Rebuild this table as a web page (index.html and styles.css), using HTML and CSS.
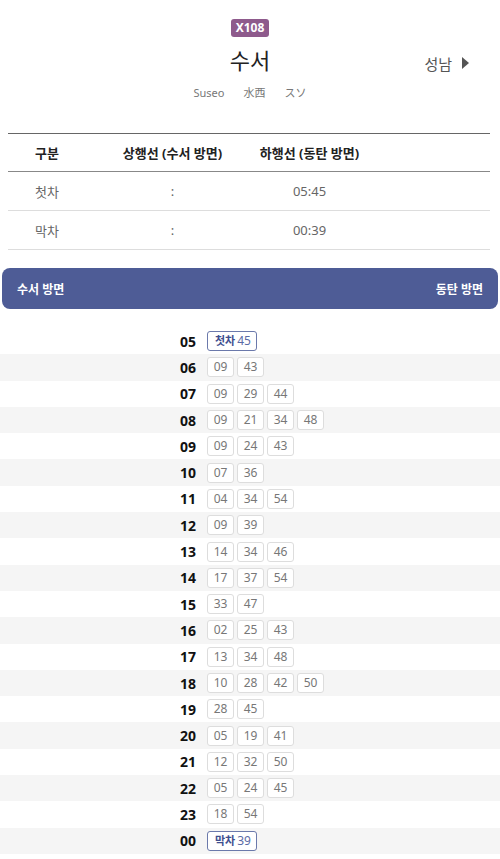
FILE: index.html
```html
<!DOCTYPE html>
<html lang="ko">
    <head>
        <meta charset="UTF-8">
        <meta name="viewport" content="width=device-width, initial-scale=1.0">
        <title>X108 수서 시간표</title>

        <!-- styling untuk halaman -->
        <link rel="stylesheet" href="styles.css">
    </head>
    <body>

        <!-- station header -->
        <header class="station">
            <span class="badge">X108</span>
            <div class="title-row">
                <span></span>
                <h1 class="title">수서</h1>
                <a class="next" href="#">성남 <span class="arrow"></span></a>
            </div>
            <p class="names">
                <span>Suseo</span>
                <span>水西</span>
                <span>スソ</span>
            </p>
        </header>

        <!-- first / last train -->
        <div class="summary">
            <div class="summary-row summary-head">
                <span>구분</span>
                <span>상행선 (수서 방면)</span>
                <span>하행선 (동탄 방면)</span>
                <span></span>
            </div>
            <div class="summary-row">
                <span>첫차</span>
                <span>:</span>
                <span>05:45</span>
                <span></span>
            </div>
            <div class="summary-row">
                <span>막차</span>
                <span>:</span>
                <span>00:39</span>
                <span></span>
            </div>
        </div>

        <!-- direction bar -->
        <div class="direction">
            <span>수서 방면</span>
            <span>동탄 방면</span>
        </div>

        <!-- timetable -->
        <div class="timetable">
            <div class="hour-row"><span class="hour">05</span><span class="min first"><b>첫차</b>45</span></div>
            <div class="hour-row"><span class="hour">06</span><span class="min">09</span><span class="min">43</span></div>
            <div class="hour-row"><span class="hour">07</span><span class="min">09</span><span class="min">29</span><span class="min">44</span></div>
            <div class="hour-row"><span class="hour">08</span><span class="min">09</span><span class="min">21</span><span class="min">34</span><span class="min">48</span></div>
            <div class="hour-row"><span class="hour">09</span><span class="min">09</span><span class="min">24</span><span class="min">43</span></div>
            <div class="hour-row"><span class="hour">10</span><span class="min">07</span><span class="min">36</span></div>
            <div class="hour-row"><span class="hour">11</span><span class="min">04</span><span class="min">34</span><span class="min">54</span></div>
            <div class="hour-row"><span class="hour">12</span><span class="min">09</span><span class="min">39</span></div>
            <div class="hour-row"><span class="hour">13</span><span class="min">14</span><span class="min">34</span><span class="min">46</span></div>
            <div class="hour-row"><span class="hour">14</span><span class="min">17</span><span class="min">37</span><span class="min">54</span></div>
            <div class="hour-row"><span class="hour">15</span><span class="min">33</span><span class="min">47</span></div>
            <div class="hour-row"><span class="hour">16</span><span class="min">02</span><span class="min">25</span><span class="min">43</span></div>
            <div class="hour-row"><span class="hour">17</span><span class="min">13</span><span class="min">34</span><span class="min">48</span></div>
            <div class="hour-row"><span class="hour">18</span><span class="min">10</span><span class="min">28</span><span class="min">42</span><span class="min">50</span></div>
            <div class="hour-row"><span class="hour">19</span><span class="min">28</span><span class="min">45</span></div>
            <div class="hour-row"><span class="hour">20</span><span class="min">05</span><span class="min">19</span><span class="min">41</span></div>
            <div class="hour-row"><span class="hour">21</span><span class="min">12</span><span class="min">32</span><span class="min">50</span></div>
            <div class="hour-row"><span class="hour">22</span><span class="min">05</span><span class="min">24</span><span class="min">45</span></div>
            <div class="hour-row"><span class="hour">23</span><span class="min">18</span><span class="min">54</span></div>
            <div class="hour-row"><span class="hour">00</span><span class="min first"><b>막차</b>39</span></div>
        </div>

    </body>
</html>
```

FILE: styles.css
```css
body {
    font-family: "Noto Sans", "Noto Sans CJK KR", sans-serif;
    margin: 0;
    padding: 0;
    color: #222;
    background-color: #fff;
}

.station {
    display: flex;
    flex-direction: column;
    align-items: center;
    padding-top: 19px;
}

.badge {
    height: 18px;
    line-height: 18px;
    padding: 0 5px;
    background-color: #8e5a8c;
    color: #fff;
    font-size: 12px;
    font-weight: bold;
    border-radius: 3px;
}

.title-row {
    align-self: stretch;
    display: grid;
    grid-template-columns: 1fr auto 1fr;
    align-items: center;
    margin-top: 8px;
}

.title {
    margin: 0;
    font-size: 22px;
    font-weight: normal;
    line-height: 30px;
}

.next {
    justify-self: end;
    padding: 6px 31px 0 0;
    display: flex;
    align-items: center;
    gap: 10px;
    font-size: 15px;
    color: #555;
    text-decoration: none;
}

.arrow {
    width: 0;
    height: 0;
    border-top: 6px solid transparent;
    border-bottom: 6px solid transparent;
    border-left: 7px solid #555;
}

.names {
    margin: 10px 0 0;
    font-size: 11px;
    line-height: 16px;
    color: #777;
    display: flex;
    justify-content: center;
    gap: 19px;
}

.summary {
    margin: 32px 10px 0 8px;
    border-top: 1px solid #666;
}

.summary-row {
    display: grid;
    grid-template-columns: 78px 173px 101px 1fr;
    height: 38px;
    align-items: center;
    text-align: center;
    font-size: 13px;
    color: #666;
    border-bottom: 1px solid #ddd;
}

.summary-head {
    height: 37px;
    font-weight: bold;
    color: #222;
    border-bottom-color: #888;
}

.direction {
    margin: 18px 2px 0;
    height: 41px;
    padding: 0 15px;
    display: flex;
    justify-content: space-between;
    align-items: center;
    background-color: #4e5c96;
    border-radius: 8px;
    color: #fff;
    font-size: 12px;
    font-weight: bold;
}

.timetable {
    margin-top: 19px;
}

.hour-row {
    height: 26.3px;
    display: flex;
    align-items: center;
    gap: 3px;
}

.hour-row:nth-child(even) {
    background-color: #f5f5f5;
}

.hour {
    width: 196px;
    margin-right: 8px;
    text-align: right;
    font-size: 14px;
    font-weight: bold;
    color: #111;
}

.min {
    box-sizing: border-box;
    width: 27px;
    height: 20px;
    line-height: 18px;
    text-align: center;
    font-size: 12px;
    color: #777;
    background-color: #fff;
    border: 1px solid #ddd;
    border-radius: 3px;
}

.min.first {
    width: auto;
    padding: 0 5px 0 7px;
    border-color: #6b79ab;
    color: #5a6aa5;
}

.min.first b {
    font-size: 11px;
    font-weight: bold;
    color: #3f4f8f;
    margin-right: 2px;
}
```
